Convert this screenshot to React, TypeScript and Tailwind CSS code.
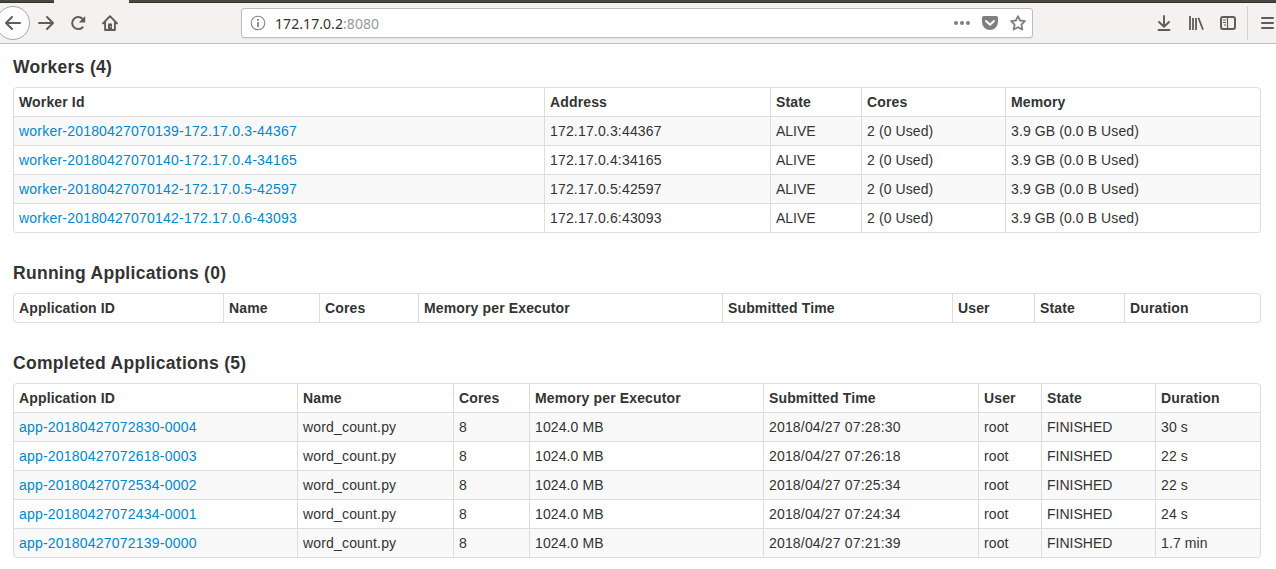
import React from "react";

type Column = { label: string; width: string };

const workerColumns: Column[] = [
  { label: "Worker Id", width: "w-[531px]" },
  { label: "Address", width: "w-[226px]" },
  { label: "State", width: "w-[91px]" },
  { label: "Cores", width: "w-[144px]" },
  { label: "Memory", width: "w-[255px]" },
];

const workers = [
  ["worker-20180427070139-172.17.0.3-44367", "172.17.0.3:44367"],
  ["worker-20180427070140-172.17.0.4-34165", "172.17.0.4:34165"],
  ["worker-20180427070142-172.17.0.5-42597", "172.17.0.5:42597"],
  ["worker-20180427070142-172.17.0.6-43093", "172.17.0.6:43093"],
].map((w) => [...w, "ALIVE", "2 (0 Used)", "3.9 GB (0.0 B Used)"]);

const runningColumns: Column[] = [
  { label: "Application ID", width: "w-[210px]" },
  { label: "Name", width: "w-[96px]" },
  { label: "Cores", width: "w-[99px]" },
  { label: "Memory per Executor", width: "w-[304px]" },
  { label: "Submitted Time", width: "w-[230px]" },
  { label: "User", width: "w-[82px]" },
  { label: "State", width: "w-[90px]" },
  { label: "Duration", width: "w-[136px]" },
];

const completedColumns: Column[] = [
  { label: "Application ID", width: "w-[284px]" },
  { label: "Name", width: "w-[156px]" },
  { label: "Cores", width: "w-[76px]" },
  { label: "Memory per Executor", width: "w-[234px]" },
  { label: "Submitted Time", width: "w-[215px]" },
  { label: "User", width: "w-[63px]" },
  { label: "State", width: "w-[114px]" },
  { label: "Duration", width: "w-[105px]" },
];

const completed = [
  ["app-20180427072830-0004", "2018/04/27 07:28:30", "30 s"],
  ["app-20180427072618-0003", "2018/04/27 07:26:18", "22 s"],
  ["app-20180427072534-0002", "2018/04/27 07:25:34", "22 s"],
  ["app-20180427072434-0001", "2018/04/27 07:24:34", "24 s"],
  ["app-20180427072139-0000", "2018/04/27 07:21:39", "1.7 min"],
].map(([id, time, duration]) => [id, "word_count.py", "8", "1024.0 MB", time, "root", "FINISHED", duration]);

function DataTable({ columns, rows }: { columns: Column[]; rows: string[][] }) {
  return (
    <table className="mb-5 w-[1248px] table-fixed border-separate border-spacing-0 overflow-hidden rounded border-r border-b border-[#ddd]">
      <thead>
        <tr>
          {columns.map((c, i) => (
            <th
              key={c.label}
              className={`${c.width} h-[29px] border-t border-l border-[#ddd] px-[5px] py-1 text-left font-bold tracking-[0.14px] whitespace-nowrap ${i === 0 ? "rounded-tl" : ""} ${i === columns.length - 1 ? "rounded-tr" : ""} ${rows.length === 0 && i === 0 ? "rounded-bl" : ""}`}
            >
              {c.label}
            </th>
          ))}
        </tr>
      </thead>
      <tbody>
        {rows.map((row, r) => (
          <tr key={row[0]} className={r % 2 === 0 ? "bg-[#f9f9f9]" : "bg-white"}>
            {row.map((cell, i) => (
              <td
                key={i}
                className={`h-[29px] border-t border-l border-[#ddd] px-[5px] py-1 whitespace-nowrap ${/^[A-Z]+$/.test(cell) ? "tracking-normal" : /[:_]/.test(cell) ? "tracking-[0.17px]" : "tracking-[0.1px]"} ${r === rows.length - 1 && i === 0 ? "rounded-bl" : ""}`}
              >
                {i === 0 ? (
                  <a href="#" className="tracking-[0.21px] text-[#0088cc]">
                    {cell}
                  </a>
                ) : (
                  cell
                )}
              </td>
            ))}
          </tr>
        ))}
      </tbody>
    </table>
  );
}

function Section({ title, columns, rows }: { title: string; columns: Column[]; rows: string[][] }) {
  return (
    <section className="flex flex-col pt-[10px]">
      <h4 className="mb-[10px] text-[17.5px] leading-5 font-bold tracking-[0.29px]">{title}</h4>
      <DataTable columns={columns} rows={rows} />
    </section>
  );
}

function Toolbar() {
  return (
    <header className="h-11 overflow-hidden border-b border-[#bfbfbf] bg-[#f3f2f1]">
      <div className="flex h-[3px]">
        <div className="w-[54px] border-b border-[#33312c] bg-[#4a4840]" />
        <div className="w-[75px] bg-[#f3f2f1]" />
        <div className="flex-1 border-b border-[#33312c] bg-[#4a4840]" />
      </div>
      <div className="flex h-10 items-center text-[#5e5d5c]">
        <div className="-ml-1 h-[34px] w-[34px] shrink-0 rounded-full border border-[#a9a8a7] bg-[#fdfdfd]">
          <svg viewBox="0 0 32 32" className="h-8 w-8" fill="none" stroke="currentColor" strokeWidth="2" strokeLinecap="round" strokeLinejoin="round">
            <path d="M9 16h14M15 10l-6 6 6 6" />
          </svg>
        </div>
        <svg viewBox="0 0 16 16" className="ml-2 h-4 w-4 shrink-0" fill="none" stroke="currentColor" strokeWidth="2" strokeLinecap="round" strokeLinejoin="round">
          <path d="M1 8h14M9 2l6 6-6 6" />
        </svg>
        <svg viewBox="0 0 16 16" className="ml-4 h-4 w-4 shrink-0" fill="none" stroke="currentColor" strokeWidth="2" strokeLinecap="round">
          <path d="M12.6 12.2A6 6 0 1 1 12.6 4" />
          <path d="M15.2 1v6.4H8.8z" fill="currentColor" stroke="none" />
        </svg>
        <svg viewBox="0 0 16 16" className="ml-4 h-4 w-4 shrink-0" fill="none" stroke="currentColor" strokeWidth="1.9" strokeLinecap="round" strokeLinejoin="round">
          <path d="M1 8.4L8 1.2l7 7.2M3.1 7.5V15h9.8V7.5" />
          <path d="M6 15V8.5h4V15z" fill="currentColor" stroke="none" />
          <path d="M8.6 11.6v.4" stroke="#f3f2f1" strokeWidth="1" />
        </svg>
        <div className="ml-[123px] flex h-[30px] w-[792px] shrink-0 items-center rounded-[3px] border border-[#bebdbc] bg-white px-2 shadow-[0_1px_1px_rgba(0,0,0,0.06)]">
          <svg viewBox="0 0 16 16" className="h-4 w-4" fill="none" stroke="#858585">
            <circle cx="8" cy="8" r="6.8" strokeWidth="1.1" />
            <path d="M8 7v5M8 4v1.8" strokeWidth="1.8" />
          </svg>
          <div className="ml-[9px] flex-1 pt-px font-['Noto_Sans',sans-serif] text-[14px] leading-5 tracking-[0.07px] text-[#333]">
            172.17.0.2<span className="text-[#999]">:8080</span>
          </div>
          <div className="flex items-center gap-3 text-[#7f7f7f]">
            <svg viewBox="0 0 16 16" className="h-4 w-4" fill="currentColor">
              <circle cx="2" cy="8" r="2" />
              <circle cx="8" cy="8" r="2" />
              <circle cx="14" cy="8" r="2" />
            </svg>
            <svg viewBox="0 0 16 16" className="h-4 w-4">
              <path d="M1.8 1h12.4A1.8 1.8 0 0 1 16 2.8V7A8 8 0 0 1 0 7V2.8A1.8 1.8 0 0 1 1.8 1z" fill="currentColor" />
              <path d="M4 6l4 3.8L12 6" fill="none" stroke="#fff" strokeWidth="2" strokeLinecap="round" strokeLinejoin="round" />
            </svg>
            <svg viewBox="0 0 16 16" className="-mr-[2px] h-4 w-4" fill="none" stroke="currentColor" strokeWidth="1.8" strokeLinejoin="round">
              <path d="M8 1.2l2.1 4.3 4.8.7-3.5 3.4.9 4.9L8 12.2l-4.3 2.3.9-4.9L1.1 6.2l4.8-.7z" />
            </svg>
          </div>
        </div>
        <svg viewBox="0 0 16 16" className="ml-[123px] h-4 w-4 shrink-0" fill="none" stroke="currentColor" strokeWidth="1.9" strokeLinecap="round" strokeLinejoin="round">
          <path d="M8 1v10.5M3 7l5 4.8L13 7M2.5 15h11" />
        </svg>
        <svg viewBox="0 0 16 16" className="ml-4 h-4 w-4 shrink-0" fill="none" stroke="currentColor" strokeWidth="1.8">
          <path d="M2 1v14M5 3v12M8 3v12M10.4 2.8L15 14.8" />
        </svg>
        <svg viewBox="0 0 16 16" className="ml-4 h-4 w-4 shrink-0" fill="none" stroke="currentColor">
          <rect x="1" y="2" width="14" height="12" rx="2" strokeWidth="2" />
          <path d="M7.5 2v12" strokeWidth="1.2" />
          <path d="M3 5h3M3 7.5h3M4 10h2" strokeWidth="1" />
        </svg>
        <div className="ml-[11px] h-[34px] w-px shrink-0 bg-[#d5d4d3]" />
        <svg viewBox="0 0 16 16" className="ml-3 h-4 w-4 shrink-0" fill="none" stroke="currentColor" strokeWidth="2" strokeLinecap="round">
          <path d="M2 3h11M2 8h11M2 13h11" />
        </svg>
      </div>
    </header>
  );
}

export default function App() {
  return (
    <div className="h-[569px] w-[1276px] overflow-hidden bg-white font-['Liberation_Sans',Arial,sans-serif] text-[14px] leading-5 text-[#333]">
      <Toolbar />
      <main className="flex flex-col px-[13px] pt-[3px]">
        <Section title="Workers (4)" columns={workerColumns} rows={workers} />
        <Section title="Running Applications (0)" columns={runningColumns} rows={[]} />
        <Section title="Completed Applications (5)" columns={completedColumns} rows={completed} />
      </main>
    </div>
  );
}
